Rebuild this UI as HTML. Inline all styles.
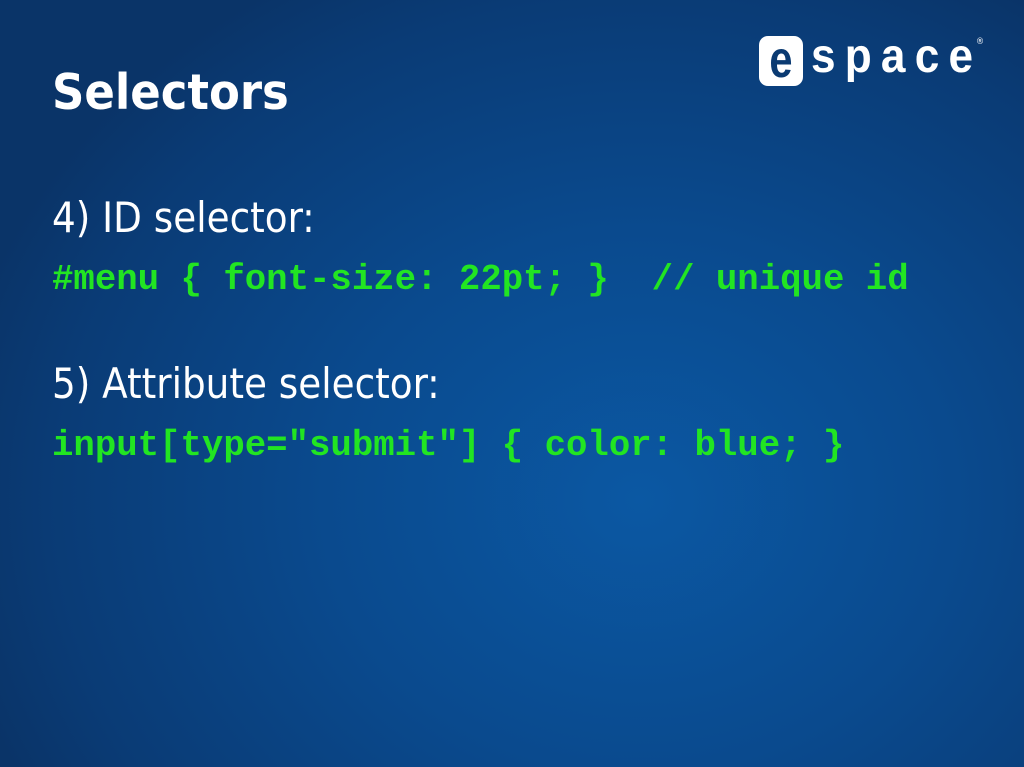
<!DOCTYPE html>
<html><head><style>
body{margin:0;width:1024px;height:767px;overflow:hidden;background:radial-gradient(ellipse 700px 600px at 640px 500px,#0b58a3 0%,#0a4a8e 45%,#0a3b75 85%,#0a3468 100%);position:relative;font-family:"DejaVu Sans Condensed","DejaVu Sans",sans-serif;color:#fff}
.t{position:absolute;left:52px;top:64px;font-size:49px;font-weight:bold;font-family:"DejaVu Sans Condensed","DejaVu Sans",sans-serif;transform:scaleX(1.02);transform-origin:left}
.h{position:absolute;left:52px;font-size:41.5px}
.c{position:absolute;left:52px;font-family:"Liberation Mono",monospace;font-weight:bold;font-size:35.7px;color:#22e522;white-space:pre}
.logo{position:absolute;left:759px;top:36px;width:44px;height:50px;background:#fff;border-radius:9px}
.logo span{position:absolute;left:0;right:0;top:-6px;text-align:center;font:bold 52px "Liberation Sans",sans-serif;color:#0a3a72;transform:scaleX(.8)}
.sp{position:absolute;left:811px;top:29px;font:bold 48px "Liberation Sans",sans-serif;letter-spacing:10px;transform:scaleX(.92);transform-origin:left}
.r{position:absolute;left:976px;top:37px;font-size:9px}
</style></head><body>
<div class="t">Selectors</div>
<div class="logo"><span>e</span></div>
<div class="sp">space</div>
<div class="r">®</div>
<div class="h" style="top:193px">4) ID selector:</div>
<div class="c" style="top:259px">#menu { font-size: 22pt; }  // unique id</div>
<div class="h" style="top:359px">5) Attribute selector:</div>
<div class="c" style="top:425px">input[type="submit"] { color: blue; }</div>
</body></html>
